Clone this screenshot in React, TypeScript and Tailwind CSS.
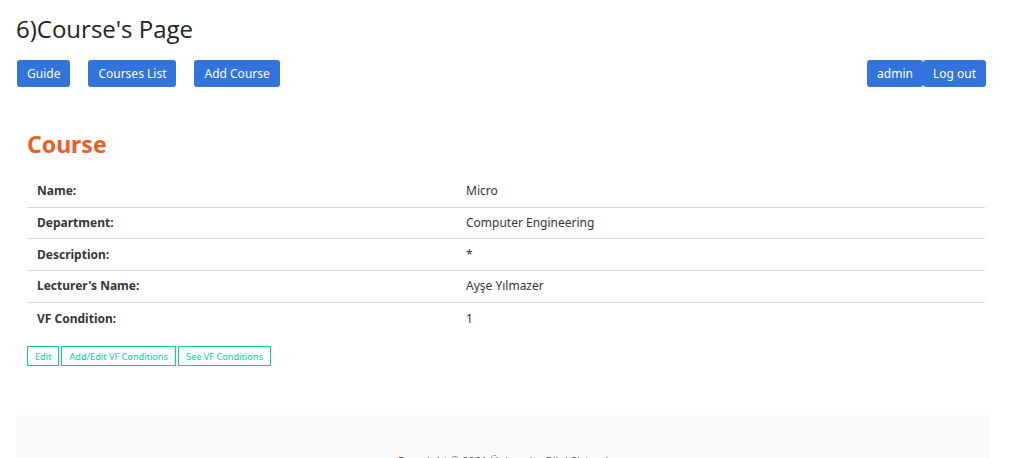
import React from "react";

const rows: [string, string][] = [
  ["Name:", "Micro"],
  ["Department:", "Computer Engineering"],
  ["Description:", "*"],
  ["Lecturer's Name:", "Ayşe Yılmazer"],
  ["VF Condition:", "1"],
];

const btn =
  "h-[27px] px-[10px] bg-[#3273dc] text-white text-[12px] rounded-[3px] flex items-center";

const small =
  "h-[20px] px-[7px] border border-[#00d1b2] text-[#00d1b2] text-[9.2px] flex items-center bg-white";

export default function App() {
  return (
    <div className="w-[1010px] h-[458px] overflow-hidden bg-white font-['Noto_Sans',sans-serif] text-[#363636]">
      <div className="px-4">
        <h1 className="font-['Open_Sans',sans-serif] text-[24px] leading-[32px] pt-[13px] text-[#222]">
          6)Course's Page
        </h1>
        <div className="mt-[15px] flex items-center justify-between pl-px pr-[8px]">
          <div className="flex gap-[18px]">
            <button className={btn}>Guide</button>
            <button className={btn}>Courses List</button>
            <button className={btn}>Add Course</button>
          </div>
          <div className="flex">
            <button className={btn}>admin</button>
            <button className={btn}>Log out</button>
          </div>
        </div>
        <div className="px-[11px] pt-[43px] pr-[9px]">
          <h2 className="text-[23px] font-bold text-[#ec5f24] leading-[28px]">Course</h2>
          <div className="mt-[18px]">
            {rows.map(([k, v], i) => (
              <div
                key={k}
                className={`flex h-[31.7px] items-center text-[12px] ${i < rows.length - 1 ? "border-b border-[#dbdbdb]" : ""}`}
              >
                <div className="w-[429px] pl-[10px] font-bold">{k}</div>
                <div className="pl-[10px]">{v}</div>
              </div>
            ))}
          </div>
          <div className="mt-[12px] flex gap-[2px]">
            <button className={small}>Edit</button>
            <button className={small}>Add/Edit VF Conditions</button>
            <button className={small}>See VF Conditions</button>
          </div>
        </div>
        <div className="mt-[49px] mr-[5px] h-[60px] bg-[#fafafa] flex justify-center pt-[38px] text-[11px] text-[#4a4a4a]">
          Copyright © 2021 Üniversite Bilgi Sistemi
        </div>
      </div>
    </div>
  );
}
